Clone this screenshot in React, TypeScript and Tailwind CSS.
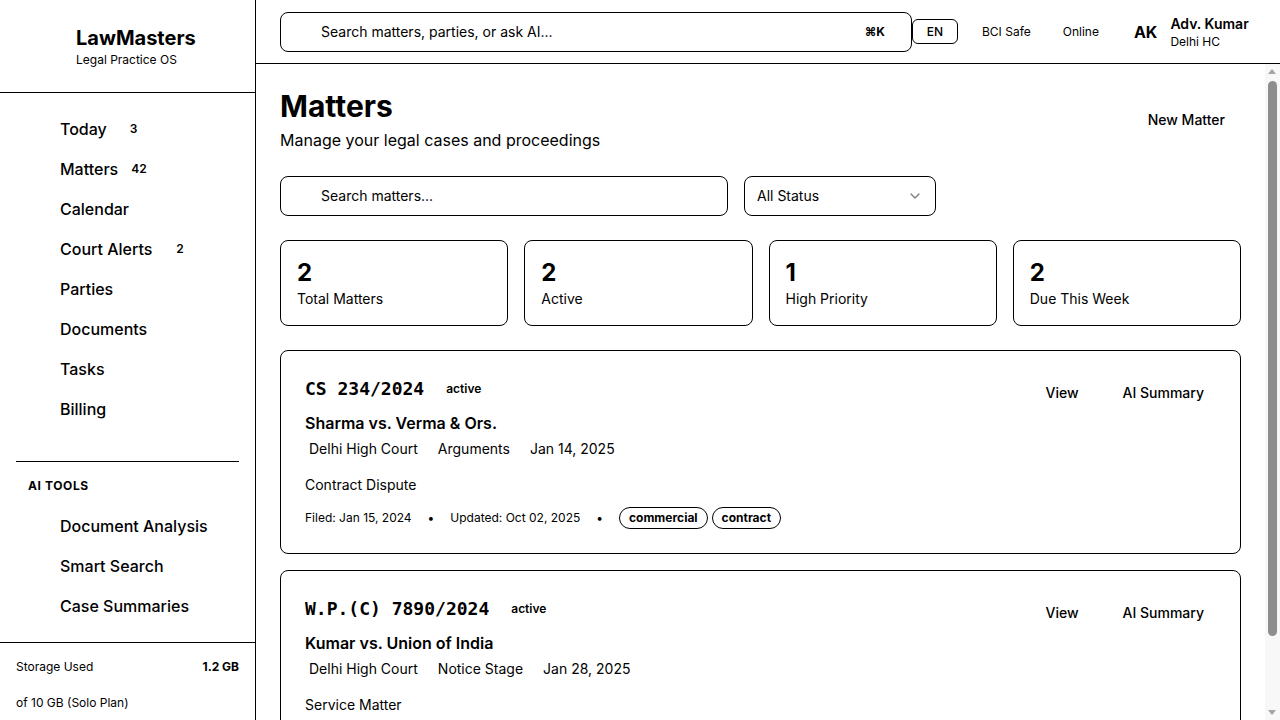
import React from "react";
import { ChevronDown } from "lucide-react";

const sans = "font-['Inter','Noto_Sans',sans-serif]";

function NavItem({ label, badge, badgeMl }: { label: string; badge?: string; badgeMl?: string }) {
  return (
    <div className="flex h-10 items-center pl-11 text-base font-medium text-black">
      <span>{label}</span>
      {badge && <span className={`text-xs font-semibold ${badgeMl}`}>{badge}</span>}
    </div>
  );
}

function Stat({ n, label }: { n: string; label: string }) {
  return (
    <div className="rounded-lg border border-black p-4">
      <div className="text-2xl font-bold leading-8">{n}</div>
      <div className="text-sm leading-5">{label}</div>
    </div>
  );
}

function MatterCard({
  num,
  title,
  court,
  stage,
  date,
  desc,
  filed,
  updated,
  tags,
}: {
  num: string;
  title: string;
  court: string;
  stage: string;
  date: string;
  desc: string;
  filed: string;
  updated: string;
  tags: string[];
}) {
  return (
    <div className="rounded-lg border border-black px-6 pt-6 pb-6">
      <div className="flex items-start justify-between">
        <div>
          <div className="flex h-7 items-center">
            <span className="font-['DejaVu_Sans_Mono',monospace] text-lg font-bold">{num}</span>
            <span className="ml-[22px] text-xs font-semibold">active</span>
          </div>
          <div className="mt-2 text-base font-semibold leading-6">{title}</div>
          <div className="mt-1 flex gap-4 text-sm leading-5">
            <span className="pl-1">{court}</span>
            <span className="pl-1">{stage}</span>
            <span className="pl-1">{date}</span>
          </div>
        </div>
        <div className="flex items-center gap-3 text-sm font-medium">
          <button className="h-9 px-4">View</button>
          <button className="h-9 pl-4 pr-3">AI Summary</button>
        </div>
      </div>
      <div className="mt-4 text-sm leading-5">{desc}</div>
      <div className="mt-3 flex items-center gap-4 text-xs">
        <span>{filed}</span>
        <span>•</span>
        <span>{updated}</span>
        <span>•</span>
        <div className="flex gap-1">
          {tags.map((t) => (
            <span key={t} className="rounded-full border border-black px-[9px] py-0.5 font-bold leading-4">
              {t}
            </span>
          ))}
        </div>
      </div>
    </div>
  );
}

export default function App() {
  return (
    <div className={`flex h-screen w-full overflow-hidden bg-white text-black ${sans}`}>
      {/* Sidebar */}
      <aside className="flex h-screen w-64 shrink-0 flex-col border-r border-black">
        <div className="flex h-[93px] shrink-0 flex-col justify-center border-b border-black pl-[76px]">
          <div className="text-xl font-bold leading-7">LawMasters</div>
          <div className="text-xs leading-4">Legal Practice OS</div>
        </div>
        <nav className="px-4 pt-4">
          <NavItem label="Today" badge="3" badgeMl="ml-[23px]" />
          <NavItem label="Matters" badge="42" badgeMl="ml-[13px]" />
          <NavItem label="Calendar" />
          <NavItem label="Court Alerts" badge="2" badgeMl="ml-[24px]" />
          <NavItem label="Parties" />
          <NavItem label="Documents" />
          <NavItem label="Tasks" />
          <NavItem label="Billing" />
        </nav>
        <div className="mx-4 mt-8 border-t border-black" />
        <div className="px-4 pt-4">
          <div className="px-3 text-xs font-bold uppercase leading-4 tracking-wider">AI Tools</div>
          <div className="mt-3">
            <NavItem label="Document Analysis" />
            <NavItem label="Smart Search" />
            <NavItem label="Case Summaries" />
          </div>
        </div>
        <div className="mt-auto h-[78px] shrink-0 border-t border-black px-4 pt-4 text-xs leading-4">
          <div className="flex justify-between">
            <span>Storage Used</span>
            <span className="font-bold">1.2 GB</span>
          </div>
          <div className="mt-5">of 10 GB (Solo Plan)</div>
        </div>
      </aside>

      {/* Main column */}
      <div className="flex min-w-0 flex-1 flex-col">
        <header className="flex h-16 shrink-0 items-center border-b border-black px-6">
          <div className="flex h-10 w-[632px] items-center justify-between rounded-lg border border-black pl-10 pr-[26px]">
            <span className="text-sm">Search matters, parties, or ask AI...</span>
            <span className="text-xs font-bold">⌘K</span>
          </div>
          <button className="flex h-[25px] w-[46px] items-center justify-center rounded-md border border-black text-xs font-medium">
            EN
          </button>
          <span className="ml-[24px] text-xs">BCI Safe</span>
          <span className="ml-[32px] text-xs">Online</span>
          <span className="ml-[35px] text-base font-bold">AK</span>
          <div className="ml-[13px] flex flex-col">
            <span className="text-sm font-semibold leading-5">Adv. Kumar</span>
            <span className="text-xs leading-4">Delhi HC</span>
          </div>
        </header>

        <div className="relative min-h-0 flex-1">
          <main className="h-full overflow-y-scroll py-6 pl-6 pr-[39px]">
            <div className="flex items-center justify-between">
              <div>
                <h1 className="text-3xl font-bold leading-9">Matters</h1>
                <p className="mt-1 text-base leading-6">Manage your legal cases and proceedings</p>
              </div>
              <button className="h-10 px-4 text-sm font-medium">New Matter</button>
            </div>

            <div className="mt-6 flex gap-4">
              <div className="flex h-10 w-[448px] items-center rounded-lg border border-black pl-10 text-sm">
                Search matters...
              </div>
              <div className="flex h-10 w-[192px] items-center justify-between rounded-lg border border-black pl-3 pr-3 text-sm">
                <span>All Status</span>
                <ChevronDown size={16} className="opacity-50" />
              </div>
            </div>

            <div className="mt-6 grid grid-cols-4 gap-4">
              <Stat n="2" label="Total Matters" />
              <Stat n="2" label="Active" />
              <Stat n="1" label="High Priority" />
              <Stat n="2" label="Due This Week" />
            </div>

            <div className="mt-6 flex flex-col gap-4">
              <MatterCard
                num="CS 234/2024"
                title="Sharma vs. Verma & Ors."
                court="Delhi High Court"
                stage="Arguments"
                date="Jan 14, 2025"
                desc="Contract Dispute"
                filed="Filed: Jan 15, 2024"
                updated="Updated: Oct 02, 2025"
                tags={["commercial", "contract"]}
              />
              <MatterCard
                num="W.P.(C) 7890/2024"
                title="Kumar vs. Union of India"
                court="Delhi High Court"
                stage="Notice Stage"
                date="Jan 28, 2025"
                desc="Service Matter"
                filed="Filed: Mar 10, 2024"
                updated="Updated: Sep 28, 2025"
                tags={["service", "writ"]}
              />
            </div>
          </main>

          {/* scrollbar */}
          <div className="pointer-events-none absolute top-0 right-0 bottom-0 w-[15px] bg-[#f8f8f8]">
            <div className="absolute top-[5px] left-[3px] h-0 w-0 border-x-[4.5px] border-b-[5px] border-x-transparent border-b-[#a3a3a3]" />
            <div className="absolute top-[17px] left-[3px] h-[555px] w-[9px] rounded-full bg-[#8e8e8e]" />
            <div className="absolute bottom-[5px] left-[3px] h-0 w-0 border-x-[4.5px] border-t-[5px] border-x-transparent border-t-[#a3a3a3]" />
          </div>
        </div>
      </div>
    </div>
  );
}
